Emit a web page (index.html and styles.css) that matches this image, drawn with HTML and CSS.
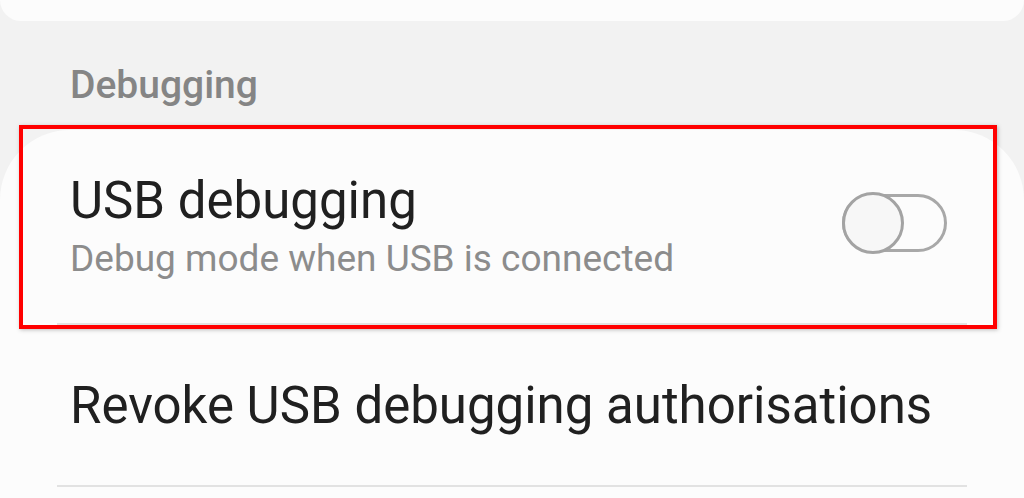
FILE: index.html
```html
<!DOCTYPE html>
<html lang="en">
<head>
  <meta charset="UTF-8" />
  <meta name="viewport" content="width=device-width, initial-scale=1.0" />
  <title>Developer options</title>
  <link rel="stylesheet" href="styles.css">
</head>
<body>
  <div class="top-card"></div>

  <h2 class="section-title">Debugging</h2>

  <div class="card">
    <div class="row row-switch">
      <div class="row-text">
        <div class="row-title">USB debugging</div>
        <div class="row-summary">Debug mode when USB is connected</div>
      </div>
      <div class="switch">
        <div class="switch-thumb"></div>
      </div>
    </div>
    <div class="divider"></div>
    <div class="row">
      <div class="row-title">Revoke USB debugging authorisations</div>
    </div>
    <div class="divider"></div>
  </div>

  <div class="highlight"></div>
</body>
</html>
```

FILE: styles.css
```css
* {
  box-sizing: border-box;
}
body {
  margin: 0;
  padding: 0;
  font-family: Roboto, "Noto Sans", sans-serif;
  background: #f2f2f2;
  overflow: hidden;
  position: relative;
}
.top-card {
  height: 21px;
  background: #fcfcfc;
  border-radius: 0 0 70px 70px;
}
.section-title {
  margin: 0;
  padding: 41px 70px 22px;
  font-size: 39px;
  line-height: 46px;
  font-weight: 500;
  color: #858585;
}
.card {
  background: #fcfcfc;
  border-radius: 70px 70px 0 0;
  padding-bottom: 13px;
}
.row {
  padding: 51px 70px 49px;
}
.row-switch {
  display: flex;
  align-items: center;
  justify-content: space-between;
  padding: 41px 77px 42px 70px;
}
.row-title {
  font-size: 51px;
  line-height: 60px;
  color: #202020;
}
.row-summary {
  margin-top: 6px;
  font-size: 37px;
  line-height: 44px;
  color: #8c8c8c;
}
.switch {
  position: relative;
  width: 105px;
  height: 58px;
  margin-bottom: 6px;
  border: 3px solid #a8a8a8;
  border-radius: 29px;
}
.switch-thumb {
  position: absolute;
  left: -3px;
  top: -5px;
  width: 62px;
  height: 62px;
  border: 3px solid #a3a3a3;
  border-radius: 50%;
  background: #f7f7f7;
}
.divider {
  height: 2px;
  margin: 0 57px;
  background: #e2e2e2;
}
.highlight {
  position: absolute;
  left: 19px;
  top: 125px;
  width: 978px;
  height: 204px;
  border: 4px solid #ff0000;
  box-shadow: 1px 1px 4px rgba(0, 0, 0, 0.25);
}
```
